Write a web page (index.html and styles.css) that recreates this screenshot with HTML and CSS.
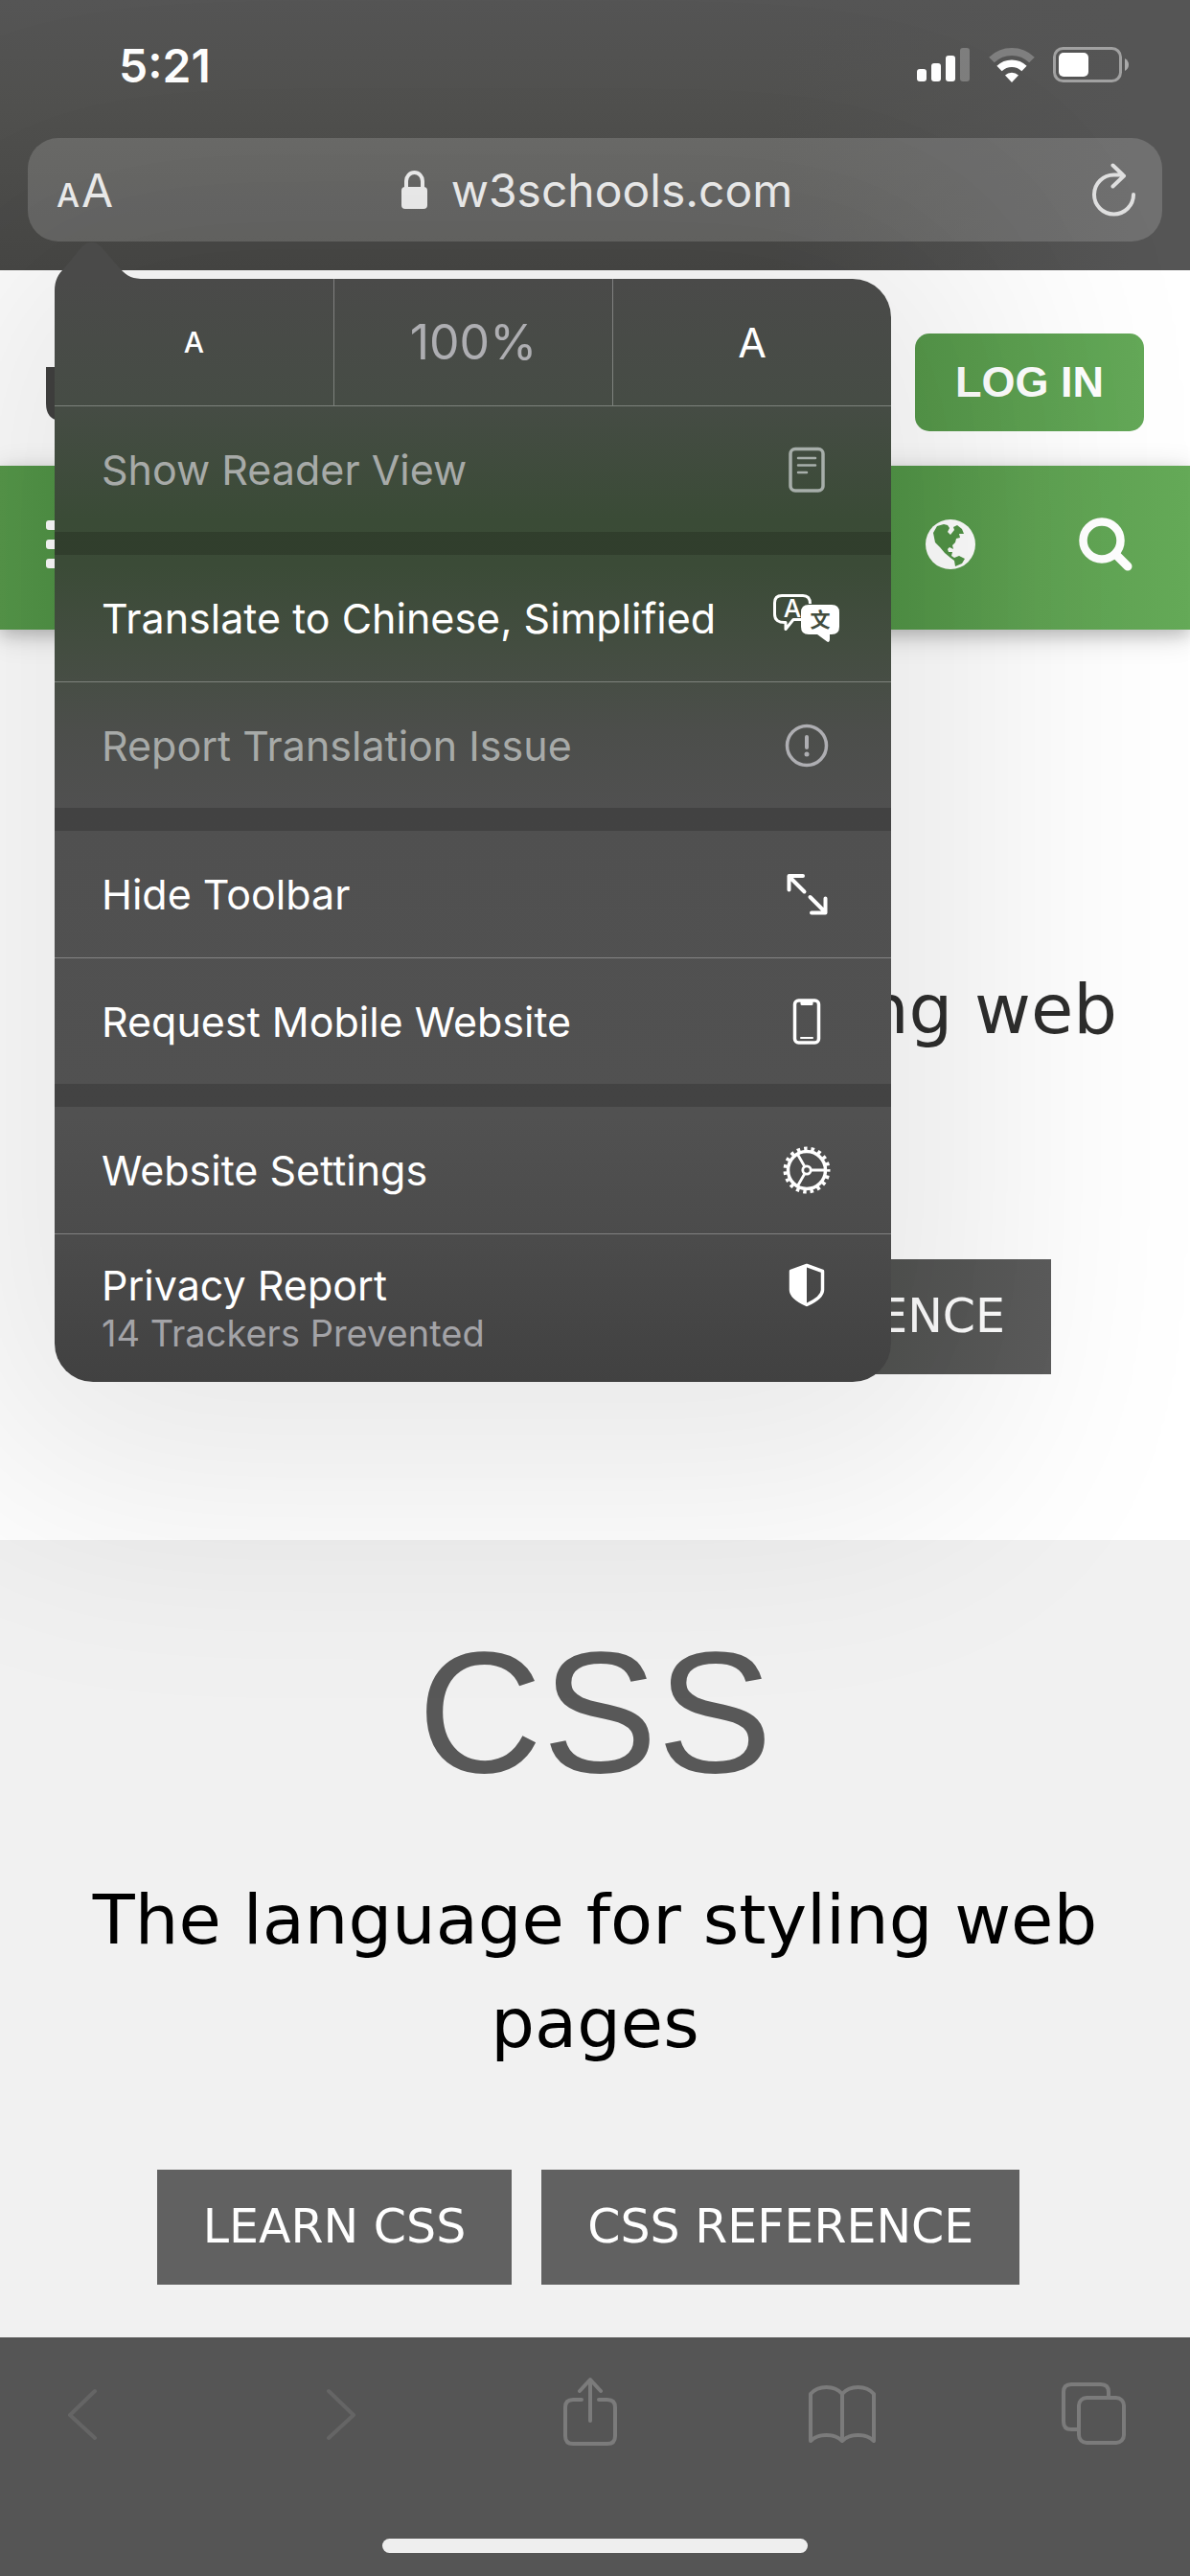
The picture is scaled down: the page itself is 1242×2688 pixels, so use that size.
FILE: index.html
```html
<!DOCTYPE html>
<html lang="en">
<head>
<meta charset="utf-8">
<meta name="viewport" content="width=device-width, initial-scale=1">
<title>w3schools.com</title>
<link rel="stylesheet" href="styles.css">
</head>
<body>
<header class="chrome">
  <div class="status">
    <time class="clock">5:21</time>
    <div class="indicators">
      <svg width="56" height="38" viewBox="0 0 56 38" fill="#fff" aria-label="Signal">
        <rect x="0" y="23" width="10" height="13" rx="3"/><rect x="15" y="17" width="10" height="19" rx="3"/><rect x="30" y="9" width="10" height="27" rx="3"/><rect x="45" y="1" width="10" height="35" rx="3" opacity=".25"/>
      </svg>
      <svg width="48" height="38" viewBox="0 0 48 38" aria-label="Wi-Fi">
        <path d="M3 13.500a30 30 0 0 1 42 0" fill="none" stroke="#fff" stroke-opacity=".25" stroke-width="8"/>
        <path d="M11 22.500a18.500 18.500 0 0 1 26 0" fill="none" stroke="#fff" stroke-width="7.500"/>
        <path d="M17 29.500a10 10 0 0 1 14 0L24 37z" fill="#fff"/>
      </svg>
      <svg width="80" height="38" viewBox="0 0 80 38" aria-label="Battery">
        <rect x="1.500" y="1.500" width="69" height="34" rx="9" fill="none" stroke="#fff" stroke-opacity=".45" stroke-width="3"/>
        <rect x="6" y="6" width="31" height="25" rx="5" fill="#fff"/>
        <path d="M75 12q4 2.500 4 6.500t-4 6.500z" fill="#fff" fill-opacity=".5"/>
      </svg>
    </div>
  </div>
  <div class="address">
    <button class="text-size" type="button" aria-label="Page settings"><span class="aa-small">A</span><span class="aa-large">A</span></button>
    <a class="site" href="#">
      <svg width="28" height="40" viewBox="0 0 28 40"><rect x="0" y="17" width="27" height="23" rx="4" fill="#f1f1f1"/><path d="M5 18V11a8.500 9 0 0 1 17 0V18" fill="none" stroke="#f1f1f1" stroke-width="4"/></svg>
      <span>w3schools.com</span>
    </a>
    <button class="reload" type="button" aria-label="Reload">
      <svg width="48" height="56" viewBox="0 0 48 56" fill="none" stroke="#e0e0e0" stroke-width="4" stroke-linecap="round" stroke-linejoin="round"><path d="M44 33A20.500 20.500 0 1 1 23.500 12.500H33M22.500 2.500L34 13.500L22.500 24.500"/></svg>
    </button>

    <div class="popover">
      <svg class="tip" width="96" height="62" viewBox="0 0 96 62"><path fill="#4a4a49" d="M0 62V52C0 40 4 34 10 28L28 6C34-1 43-1 49 6L68 28C76 37 82 39 94 39V62Z"/></svg>
      <div class="panel">
        <div class="zoom">
          <button class="zoom-small" type="button" aria-label="Decrease text size">A</button>
          <button class="zoom-value" type="button">100%</button>
          <button class="zoom-large" type="button" aria-label="Increase text size">A</button>
        </div>
        <button class="item dim" type="button" disabled>
          <span>Show Reader View</span>
          <svg width="70" height="50" viewBox="0 0 70 50" fill="none" stroke="#a7aeaa" stroke-width="3.500" stroke-linecap="round"><rect x="18" y="3.500" width="34" height="43.500" rx="5"/><path stroke-width="2.500" d="M26 13H44M26 20.500H44M26 28H35"/></svg>
        </button>
        <div class="gap"></div>
        <button class="item" type="button">
          <span>Translate to Chinese, Simplified</span>
          <svg width="70" height="50" viewBox="0 0 70 50">
            <path d="M30 26.500H21L13 36.500V29.500Q1.500 30 1.500 21V9Q1.500 1.500 9 1.500H31Q38.500 1.500 38.500 10" fill="none" stroke="#fff" stroke-width="3" stroke-linejoin="round"/>
            <text class="glyph-a" x="20" y="24" text-anchor="middle">A</text>
            <path d="M37 11H61Q69 11 69 19V34Q69 42 61 42H59V47Q59 51.500 55.500 49L46 42H37Q29 42 29 34V19Q29 11 37 11Z" fill="#fff"/>
            <text class="glyph-wen" x="49" y="34" text-anchor="middle">文</text>
          </svg>
        </button>
        <button class="item dim ruled" type="button" disabled>
          <span>Report Translation Issue</span>
          <svg width="70" height="50" viewBox="0 0 70 50" fill="none" stroke="#aeaeb2" stroke-linecap="round"><circle cx="35" cy="25" r="20.500" stroke-width="3.500"/><path stroke-width="4" d="M35 16V27"/><circle cx="35" cy="34" r="2.500" fill="#aeaeb2" stroke="none"/></svg>
        </button>
        <div class="gap"></div>
        <button class="item" type="button">
          <span>Hide Toolbar</span>
          <svg width="70" height="50" viewBox="0 0 70 50" fill="none" stroke="#fff" stroke-width="4" stroke-linecap="round" stroke-linejoin="round"><path d="M32.500 22.500L16.500 6.500M16.500 20.500V6H31M38.500 28L54.500 44M54.500 29.500V44.500H40"/></svg>
        </button>
        <button class="item ruled" type="button">
          <span>Request Mobile Website</span>
          <svg width="70" height="50" viewBox="0 0 70 50" fill="none" stroke="#fff"><rect x="22.500" y="3" width="25" height="44" rx="4" stroke-width="3.500"/><path d="M28.500 4H41.500V6.500Q41.500 8 40 8H30Q28.500 8 28.500 6.500Z" fill="#fff" stroke="none"/><path d="M29 42H41" stroke-width="2" stroke-linecap="round"/></svg>
        </button>
        <div class="gap"></div>
        <button class="item" type="button">
          <span>Website Settings</span>
          <svg width="70" height="50" viewBox="0 0 70 50" fill="none" stroke="#fff"><circle cx="35" cy="25" r="19.500" stroke-width="3.500"/><circle cx="35" cy="25" r="22.500" stroke-width="4" stroke-dasharray="3.500 3.940" stroke-dashoffset="1.750"/><circle cx="35" cy="25" r="4.200" stroke-width="2.800"/><path stroke-width="2.800" d="M40 25H54M32.500 20.700L25.500 8.500M32.500 29.300L25.500 41.500"/></svg>
        </button>
        <button class="item ruled report" type="button">
          <span>Privacy Report<small>14 Trackers Prevented</small></span>
          <svg width="70" height="50" viewBox="0 0 70 50"><path d="M35 4.500L51.500 10.500V30Q51.500 38 35 45.500Q18.500 38 18.500 30V10.500Z" fill="none" stroke="#fff" stroke-width="3.500" stroke-linejoin="round"/><path d="M35 4.500V45.500Q18.500 38 18.500 30V10.500Z" fill="#fff"/></svg>
        </button>
      </div>
    </div>
  </div>
</header>

<main class="page">
  <div class="masthead">
    <svg width="60" height="80" viewBox="0 0 60 80" aria-label="w3schools"><path d="M0 24H60V80H14Q0 78 0 62Z" fill="#424241"/></svg>
    <button class="login" type="button">LOG IN</button>
  </div>
  <nav class="navbar">
    <button class="nav-button menu" type="button" aria-label="Menu"><svg width="56" height="56" viewBox="0 0 56 56" fill="#fff"><rect y="3" width="56" height="10" rx="3"/><rect y="23" width="56" height="10" rx="3"/><rect y="43" width="56" height="10" rx="3"/></svg></button>
    <button class="nav-button" type="button" aria-label="Translate"><svg width="56" height="56" viewBox="0 0 56 56"><circle cx="28" cy="28" r="26" fill="#fff"/><path fill="#529446" d="M10 16L14 9L21 7L25 8L27 11L25 15L28 18L32 13L31 10L35 8L40 12L42 17L37 17L38 21L34 22L33 26L30 29L31 33L27 31L25 33L26 36L30 36L29 40L32 42L37 40L43 43L40 48L33 51L32 45L28 42L22 37L17 31L12 26Z"/></svg></button>
    <button class="nav-button" type="button" aria-label="Search"><svg width="60" height="60" viewBox="0 0 60 60" fill="none" stroke="#fff"><circle cx="26" cy="26" r="19.500" stroke-width="8.500"/><path d="M41 41L53 53" stroke-width="9" stroke-linecap="round"/></svg></button>
  </nav>
  <section class="intro">
    <p>building web</p>
    <a class="action" href="#">HTML REFERENCE</a>
  </section>
  <section class="topic">
    <h1>CSS</h1>
    <p>The language for styling web pages</p>
    <div class="actions"><a class="action" href="#">LEARN CSS</a><a class="action" href="#">CSS REFERENCE</a></div>
  </section>
</main>

<footer class="toolbar">
  <div class="tools">
    <button type="button" aria-label="Back" class="faint"><svg width="72" height="80" viewBox="0 0 72 80"><path d="M49 17L23 42L49 66"/></svg></button>
    <button type="button" aria-label="Forward" class="faint"><svg width="72" height="80" viewBox="0 0 72 80"><path d="M29 17L55 42L29 66"/></svg></button>
    <button type="button" aria-label="Share"><svg width="72" height="80" viewBox="0 0 72 80"><path d="M29 26H20Q12 26 12 34V64Q12 72 20 72H56Q64 72 64 64V34Q64 26 56 26H47M38 48V6M27 17L38 5L49 17"/></svg></button>
    <button type="button" aria-label="Bookmarks"><svg width="72" height="80" viewBox="0 0 72 80"><path d="M37 20Q31 13 20.500 13T4 20V69Q10 63 20.500 63T37 69Q43 63 53.500 63T70 69V20Q64 13 53.500 13T37 20V69"/></svg></button>
    <button type="button" aria-label="Tabs"><svg width="72" height="80" viewBox="0 0 72 80"><rect x="20" y="24" width="47" height="47" rx="8"/><path d="M20 57H12Q4 57 4 49V18Q4 10 12 10H43Q51 10 51 18V24"/></svg></button>
  </div>
  <div class="home-bar"></div>
</footer>
</body>
</html>
```
FILE: styles.css
```css
* { box-sizing: border-box; }

body {
  margin: 0;
  min-height: 100vh;
  display: flex;
  flex-direction: column;
  overflow-x: hidden;
  background: #fff;
  font-family: Inter, "Liberation Sans", sans-serif;
}

button {
  margin: 0;
  padding: 0;
  border: 0;
  background: none;
  color: inherit;
  font: inherit;
}

a { color: inherit; text-decoration: none; }
svg { display: block; flex: none; }

/* Browser chrome */
.chrome {
  position: relative;
  z-index: 2;
  padding: 0 29px 30px;
  background:
    linear-gradient(to right, rgba(85, 85, 85, 0) 65%, #555 95%),
    linear-gradient(#555, #51514f 40%, #484846);
  color: #fff;
}

.status {
  height: 144px;
  padding: 0 34px 8px 95px;
  display: flex;
  align-items: center;
  justify-content: space-between;
}

.clock { font-size: 48px; font-weight: 600; }

.indicators { display: flex; gap: 19px; }

.address {
  position: relative;
  height: 108px;
  padding: 0 26px 0 30px;
  display: grid;
  grid-template-columns: 1fr auto 1fr;
  align-items: center;
  border-radius: 32px;
  background: rgba(255, 255, 255, .16);
  color: #f1f1f1;
}

.text-size {
  justify-self: start;
  display: flex;
  align-items: baseline;
  gap: 2px;
}

.aa-small { font-size: 34px; font-weight: 500; }
.aa-large { font-size: 48px; }

.site {
  display: flex;
  align-items: center;
  gap: 24px;
  font-size: 48px;
}

.reload { justify-self: end; }

/* Page settings popover */
.popover {
  position: absolute;
  top: 147px;
  left: 28px;
  width: 873px;
  max-width: 100%;
  border-radius: 40px;
  box-shadow: 0 20px 300px 100px rgba(0, 0, 0, .09);
  color: #fff;
}

.tip {
  position: absolute;
  top: -39px;
  left: 0;
}

.panel {
  position: relative;
  overflow: hidden;
  border-radius: 16px 40px 40px 40px;
  background: linear-gradient(#4a4a49, #464c45 11%, #3a4b36 22%, #3b4b37 26%, #434d40 33%, #4c4e4b 41%, #505050 48%, #515151 76%, #4b4b4b 87%, #414141);
}

.zoom {
  height: 132px;
  display: grid;
  grid-template-columns: 1fr 1fr 1fr;
}

.zoom button + button { border-left: 1px solid rgba(255, 255, 255, .3); }
.zoom-small { font-size: 30px; font-weight: 500; }
.zoom-value { font-size: 50px; color: #aeaeb2; }
.zoom-large { font-size: 43px; }

.item {
  width: 100%;
  height: 132px;
  padding: 0 53px 0 49px;
  display: flex;
  align-items: center;
  justify-content: space-between;
  text-align: left;
  font-size: 43px;
  line-height: 50px;
}

.dim { color: #a7aaa8; }
.ruled, .zoom + .item { border-top: 1px solid rgba(255, 255, 255, .3); }

.gap {
  height: 24px;
  background: rgba(0, 0, 0, .17);
}

.report {
  height: 155px;
  align-items: flex-start;
  padding-top: 28px;
}

.report small {
  display: block;
  font-size: 38px;
  color: #a3a3a7;
}

.glyph-a { font: 500 26px Inter, sans-serif; fill: #fff; }
.glyph-wen { font: 700 21px "Noto Sans CJK SC", sans-serif; fill: #414c3e; }

/* Web page */
.page {
  flex: 1;
  display: flex;
  flex-direction: column;
}

.masthead {
  height: 204px;
  padding: 30px 48px 0;
  display: flex;
  align-items: center;
  justify-content: space-between;
}

.login {
  width: 239px;
  height: 102px;
  border-radius: 15px;
  background: linear-gradient(to right, #56984a, #64a958);
  color: #fff;
  font: bold 45px "Liberation Sans", Arial, sans-serif;
}

.navbar {
  height: 171px;
  padding: 0 58px 8px 48px;
  display: flex;
  align-items: center;
  gap: 104px;
  background: linear-gradient(to right, #57994b, #519446 5%, #519446 74%, #5fa252 87%, #65aa58);
  box-shadow: 0 6px 15px rgba(0, 0, 0, .16), 0 6px 30px rgba(0, 0, 0, .16);
}

.menu { margin-right: auto; }

.intro,
.topic {
  font: 72px/108px Verdana, "DejaVu Sans", sans-serif;
}

.intro {
  padding: 342px 76px 173px;
  display: flex;
  flex-direction: column;
  align-items: flex-end;
  color: #2e2e2d;
}

.intro p { margin: 0 0 207px; }

.topic {
  flex: 1;
  padding: 45px 48px 55px;
  background: #f1f1f1;
  text-align: center;
}

.topic h1 {
  margin: 0 0 27px;
  color: #585858;
  font: 180px/270px "Liberation Sans", Arial, sans-serif;
}

.topic p { margin: 0 0 99px; }

.actions {
  padding-right: 14px;
  display: flex;
  justify-content: center;
  gap: 31px;
}

.action {
  padding: 24px 48px;
  background: #616161;
  color: #fff;
  font-size: 49px;
  line-height: 72px;
}

.intro .action {
  margin-right: 69px;
  background: linear-gradient(to right, #4d4f4c 50%, #5c5c5c);
}

/* Bottom toolbar */
.toolbar {
  position: relative;
  z-index: 1;
  height: 249px;
  padding: 39px 0 24px;
  display: flex;
  flex-direction: column;
  align-items: center;
  justify-content: space-between;
  background: #555;
}

.tools {
  width: 100%;
  padding: 0 64px 0 50px;
  display: flex;
  justify-content: space-between;
}

.tools svg {
  fill: none;
  stroke: #7b7b7b;
  stroke-width: 4;
  stroke-linecap: round;
  stroke-linejoin: round;
}

.tools .faint svg { stroke: #656565; }

.home-bar {
  width: 444px;
  height: 15px;
  border-radius: 8px;
  background: #eee;
}
```
